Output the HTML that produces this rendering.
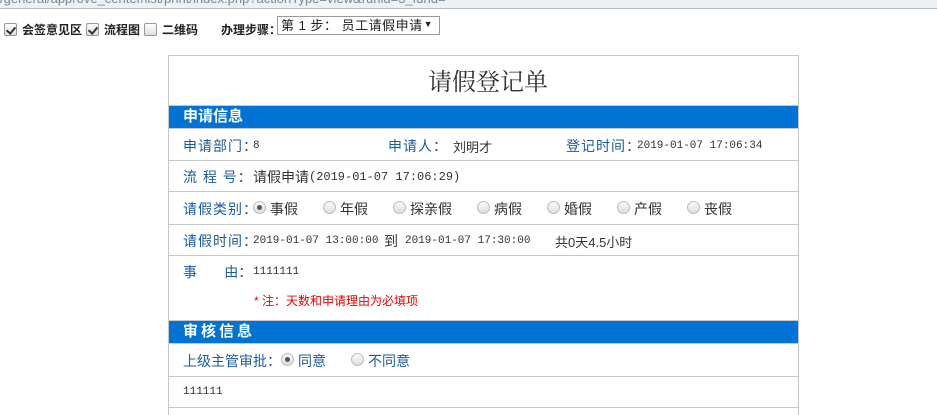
<!DOCTYPE html>
<html><head><meta charset="utf-8"><style>
*{margin:0;padding:0;box-sizing:border-box}
body{width:937px;height:410px;overflow:hidden;background:#fff;position:relative;font-family:"Liberation Sans","Noto Sans CJK SC",sans-serif;font-size:13px;color:#222}
.a{position:absolute;white-space:nowrap}
.cb{position:absolute;width:13px;height:13px;border:1px solid #999;border-radius:2px;background:linear-gradient(#fff,#ddd)}
.cb.on::after{content:"";position:absolute;left:3px;top:1px;width:4px;height:7px;border:solid #333;border-width:0 2px 2px 0;transform:rotate(40deg)}
.hl{position:absolute;left:168px;width:631px;height:1px;background:#c8c8c8}
.blue{position:absolute;left:169px;width:629px;background:#0073d4;color:#fff;font-weight:bold;font-size:15px;padding-left:14px;line-height:22px}
.lb{color:#1b5c9c;font-size:14px}
.m{font-family:"Liberation Mono","Noto Sans CJK SC",monospace;font-size:11px;color:#333}
.r{position:absolute;width:13px;height:13px;border:1px solid #bbb;border-radius:50%;background:linear-gradient(#fafafa,#ddd)}
.r.on::after{content:"";position:absolute;left:3px;top:3px;width:5px;height:5px;border-radius:50%;background:#555}
.t{font-size:14px;color:#333}
.tl{font-size:12px;font-weight:bold;color:#222}
</style></head><body>
<div class="a" style="left:0;top:0;width:937px;height:9px;background:#eef1f3;border-bottom:1px solid #bbb;overflow:hidden"><span style="position:absolute;top:-9px;left:0;color:#789;font-size:13px">/general/approve_center/list/print/index.php?actionType=view&amp;runid=3_fund=&nbsp;&nbsp;&nbsp;&nbsp;&nbsp;&nbsp;&nbsp;&nbsp;</span></div>

<div class="cb on" style="left:4px;top:23px"></div>
<div class="a tl" style="left:22px;top:21px">会签意见区</div>
<div class="cb on" style="left:86px;top:23px"></div>
<div class="a tl" style="left:104px;top:21px">流程图</div>
<div class="cb" style="left:144px;top:23px"></div>
<div class="a tl" style="left:162px;top:21px">二维码</div>
<div class="a tl" style="left:221px;top:21px">办理步骤：</div>
<div class="a" style="left:277px;top:16px;width:163px;height:19px;border:1px solid #999;font-size:13px;line-height:17px;padding-left:3px;color:#222;letter-spacing:0.5px">第 1 步： 员工请假申请<span style="position:absolute;right:6px;top:-1px;font-size:9px">▼</span></div>

<div class="a" style="left:168px;top:55px;width:631px;height:360px;border:1px solid #c8c8c8;border-bottom:none"></div>
<div class="a" style="left:428px;top:62px;font-family:'Liberation Serif','Noto Serif CJK SC',serif;font-size:24px;color:#333">请假登记单</div>
<div class="hl" style="top:105px"></div>
<div class="blue" style="top:106px">申请信息</div>
<div class="hl" style="top:128px"></div>

<div class="a lb" style="left:183px;top:136px;letter-spacing:1px">申请部门：</div><div class="a m" style="left:253px;top:140px">8</div>
<div class="a lb" style="left:388px;top:136px;letter-spacing:1px">申请人：</div><div class="a" style="left:453px;top:137px;font-size:13px;color:#333">刘明才</div>
<div class="a lb" style="left:566px;top:136px;letter-spacing:1px">登记时间：</div><div class="a m" style="left:637px;top:140px">2019-01-07 17:06:34</div>
<div class="hl" style="top:160px"></div>

<div class="a lb" style="left:183px;top:167px;letter-spacing:1px">流 程 号：</div><div class="a t" style="left:253px;top:167px">请假申请</div><div class="a m" style="left:309px;top:170px;font-size:12px">(2019-01-07 17:06:29)</div>
<div class="hl" style="top:191px"></div>

<div class="a lb" style="left:183px;top:199px;letter-spacing:1px">请假类别：</div>
<div class="r on" style="left:253px;top:201px"></div><div class="a t" style="left:270px;top:199px">事假</div>
<div class="r" style="left:323px;top:201px"></div><div class="a t" style="left:340px;top:199px">年假</div>
<div class="r" style="left:393px;top:201px"></div><div class="a t" style="left:410px;top:199px">探亲假</div>
<div class="r" style="left:477px;top:201px"></div><div class="a t" style="left:494px;top:199px">病假</div>
<div class="r" style="left:547px;top:201px"></div><div class="a t" style="left:564px;top:199px">婚假</div>
<div class="r" style="left:617px;top:201px"></div><div class="a t" style="left:634px;top:199px">产假</div>
<div class="r" style="left:687px;top:201px"></div><div class="a t" style="left:704px;top:199px">丧假</div>
<div class="hl" style="top:224px"></div>

<div class="a lb" style="left:183px;top:231px;letter-spacing:1px">请假时间：</div>
<div class="a m" style="left:253px;top:235px">2019-01-07 13:00:00</div>
<div class="a t" style="left:384px;top:231px">到</div>
<div class="a m" style="left:405px;top:235px">2019-01-07 17:30:00</div>
<div class="a" style="left:555px;top:232px;font-size:13px;color:#333">共0天4.5小时</div>
<div class="hl" style="top:255px"></div>

<div class="a lb" style="left:183px;top:262px">事&nbsp;&nbsp;&nbsp;&nbsp;&nbsp;&nbsp;&nbsp;由：</div><div class="a m" style="left:253px;top:266px">1111111</div>
<div class="a" style="left:254px;top:292px;font-size:12px;color:#e00">* 注：天数和申请理由为必填项</div>
<div class="hl" style="top:320px"></div>
<div class="blue" style="top:321px;letter-spacing:3px">审核信息</div>
<div class="hl" style="top:343px"></div>

<div class="a lb" style="left:183px;top:351px">上级主管审批：</div>
<div class="r on" style="left:281px;top:353px"></div><div class="a lb" style="left:298px;top:351px">同意</div>
<div class="r" style="left:351px;top:353px"></div><div class="a lb" style="left:368px;top:351px">不同意</div>
<div class="hl" style="top:376px"></div>
<div class="a m" style="left:183px;top:386px">111111</div>
<div class="hl" style="top:407px"></div>
</body></html>
